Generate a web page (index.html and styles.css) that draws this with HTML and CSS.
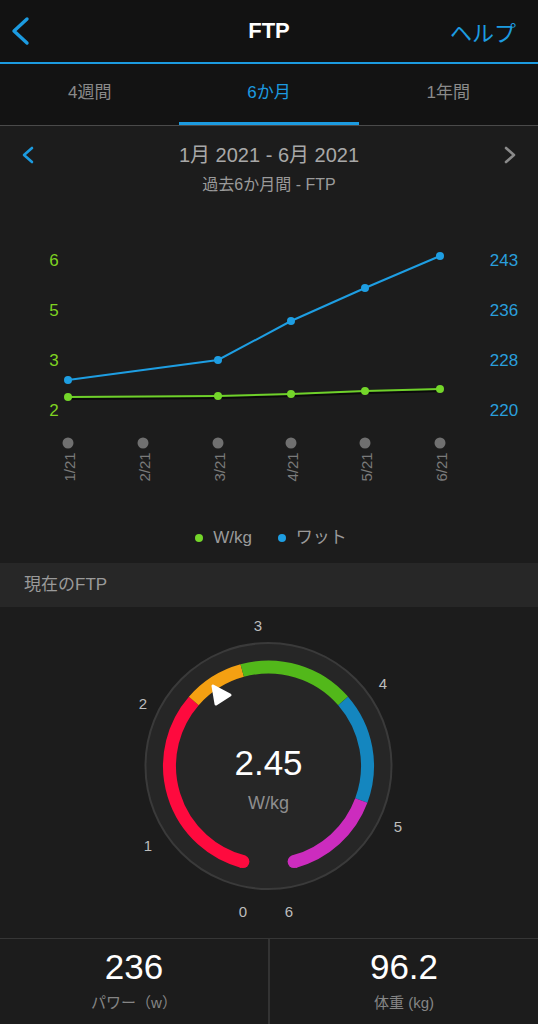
FILE: index.html
```html
<!DOCTYPE html>
<html lang="ja">
<head>
    <meta charset="UTF-8">
    <meta name="viewport" content="width=device-width, initial-scale=1.0">
    <title>FTP</title>
    <link rel="stylesheet" href="styles.css">
</head>
<body>

<header class="topbar">
    <svg class="back" width="40" height="62" viewBox="0 0 40 62">
        <polyline points="27,19 14,31 27,43" />
    </svg>
    <h1>FTP</h1>
    <a class="help">ヘルプ</a>
</header>

<nav class="tabs">
    <div class="tab">4週間</div>
    <div class="tab active">6か月</div>
    <div class="tab">1年間</div>
</nav>

<main class="page">
    <div class="range">
        <div class="range-row">
            <svg class="chev chev-left" width="14" height="20" viewBox="0 0 14 20">
                <polyline points="11,3 3,10 11,17" />
            </svg>
            <div class="range-title">1月 2021 - 6月 2021</div>
            <svg class="chev chev-right" width="14" height="20" viewBox="0 0 14 20">
                <polyline points="3,3 11,10 3,17" />
            </svg>
        </div>
        <div class="range-sub">過去6か月間 - FTP</div>
    </div>

    <svg class="chart" width="538" height="280" viewBox="0 0 538 280">
        <g class="axis-left">
            <text x="54" y="40">6</text>
            <text x="54" y="90">5</text>
            <text x="54" y="140">3</text>
            <text x="54" y="190">2</text>
        </g>
        <g class="axis-right">
            <text x="504" y="40">243</text>
            <text x="504" y="90">236</text>
            <text x="504" y="140">228</text>
            <text x="504" y="190">220</text>
        </g>

        <polyline class="line-green-shadow" points="68,179 218,178 291,176 365,173 440,171" />
        <polyline class="line-blue" points="68,160 218,140 291,101 365,68 440,36" />
        <polyline class="line-green" points="68,177 218,176 291,174 365,171 440,169" />

        <g class="pts-blue">
            <circle cx="68" cy="160" r="4" />
            <circle cx="218" cy="140" r="4" />
            <circle cx="291" cy="101" r="4" />
            <circle cx="365" cy="68" r="4" />
            <circle cx="440" cy="36" r="4" />
        </g>
        <g class="pts-green">
            <circle cx="68" cy="177" r="4" />
            <circle cx="218" cy="176" r="4" />
            <circle cx="291" cy="174" r="4" />
            <circle cx="365" cy="171" r="4" />
            <circle cx="440" cy="169" r="4" />
        </g>

        <g class="ticks">
            <circle cx="68" cy="223" r="5.5" />
            <circle cx="143" cy="223" r="5.5" />
            <circle cx="218" cy="223" r="5.5" />
            <circle cx="291" cy="223" r="5.5" />
            <circle cx="365" cy="223" r="5.5" />
            <circle cx="440" cy="223" r="5.5" />
        </g>
        <g class="months">
            <text transform="translate(69,247) rotate(-90)">1/21</text>
            <text transform="translate(144,247) rotate(-90)">2/21</text>
            <text transform="translate(219,247) rotate(-90)">3/21</text>
            <text transform="translate(292,247) rotate(-90)">4/21</text>
            <text transform="translate(366,247) rotate(-90)">5/21</text>
            <text transform="translate(441,247) rotate(-90)">6/21</text>
        </g>
    </svg>

    <div class="legend">
        <span class="dot dot-green"></span><span class="legend-label">W/kg</span>
        <span class="dot dot-blue"></span><span class="legend-label">ワット</span>
    </div>

    <div class="section-head">現在のFTP</div>

    <svg class="gauge" width="538" height="331" viewBox="0 0 538 331">
        <circle class="gauge-bg" cx="268.5" cy="159" r="123" />

        <!-- zones, clockwise from 0 -->
        <path class="zone zone-red" d="M242.9,254.6 A99,99 0 0 1 193.8,94.0" />
        <path class="zone zone-orange" d="M193.8,94.0 A99,99 0 0 1 242.2,63.6" />
        <path class="zone zone-green" d="M242.2,63.6 A99,99 0 0 1 343.1,93.9" />
        <path class="zone zone-blue" d="M343.1,93.9 A99,99 0 0 1 361.3,193.5" />
        <path class="zone zone-magenta" d="M361.3,193.5 A99,99 0 0 1 294.1,254.6" />
        <circle class="cap-red" cx="242.9" cy="254.6" r="6.5" />
        <circle class="cap-magenta" cx="294.1" cy="254.6" r="6.5" />

        <polygon class="pointer" points="213,79 216,97 230,88" />

        <g class="scale">
            <text x="258" y="18">3</text>
            <text x="383" y="76">4</text>
            <text x="143" y="96">2</text>
            <text x="398" y="219">5</text>
            <text x="148" y="238">1</text>
            <text x="243" y="304">0</text>
            <text x="289" y="304">6</text>
        </g>

        <text class="gauge-value" x="268.5" y="155">2.45</text>
        <text class="gauge-unit" x="268.5" y="196">W/kg</text>
    </svg>

    <div class="stats">
        <div class="stat">
            <div class="stat-value">236</div>
            <div class="stat-label">パワー（w）</div>
        </div>
        <div class="stat">
            <div class="stat-value">96.2</div>
            <div class="stat-label">体重 (kg)</div>
        </div>
    </div>
</main>

</body>
</html>
```

FILE: styles.css
```css
body {
    margin: 0;
    background-color: #1c1c1c;
    font-family: "Liberation Sans", "Noto Sans CJK JP", sans-serif;
    color: #aaaaaa;
}

.topbar {
    display: grid;
    grid-template-columns: 1fr auto 1fr;
    align-items: center;
    height: 62px;
    background-color: #121212;
    border-bottom: 2px solid #1c9be0;
}

.topbar h1 {
    margin: 0;
    font-size: 22px;
    font-weight: bold;
    color: #ffffff;
}

.back {
    display: block;
}

.back polyline {
    fill: none;
    stroke: #1c9be0;
    stroke-width: 3.4;
    stroke-linecap: round;
    stroke-linejoin: round;
}

.help {
    justify-self: end;
    padding-right: 22px;
    font-size: 22px;
    color: #1c9be0;
}

.tabs {
    display: flex;
    background-color: #131313;
    border-bottom: 1px solid #4a4a4a;
}

.tab {
    flex: 1;
    height: 58px;
    line-height: 58px;
    text-align: center;
    font-size: 17px;
    color: #8a8a8a;
    border-bottom: 3px solid transparent;
}

.tab.active {
    color: #1c9be0;
    border-bottom-color: #1c9be0;
}

.page {
    background-color: #1c1c1c;
}

.range {
    height: 94px;
    box-sizing: border-box;
    padding-top: 17px;
}

.range-row {
    display: flex;
    align-items: center;
    justify-content: space-between;
    padding: 0 21px 0 21px;
    height: 24px;
}

.range-title {
    font-size: 20px;
    line-height: 24px;
    color: #a8a8a8;
}

.chev polyline {
    fill: none;
    stroke-width: 2.6;
    stroke-linecap: round;
    stroke-linejoin: round;
}

.chev-left polyline {
    stroke: #1c9be0;
}

.chev-right polyline {
    stroke: #8a8a8a;
}

.range-sub {
    margin-top: 8px;
    text-align: center;
    font-size: 16px;
    line-height: 20px;
    color: #9a9a9a;
}

.chart {
    display: block;
}

.chart text {
    dominant-baseline: central;
    text-anchor: middle;
}

.axis-left text {
    font-size: 17px;
    fill: #7ed321;
}

.axis-right text {
    font-size: 17px;
    fill: #2a9fdc;
}

.line-blue {
    fill: none;
    stroke: #1e9ee2;
    stroke-width: 2;
}

.line-green {
    fill: none;
    stroke: #6fd12a;
    stroke-width: 2;
}

.line-green-shadow {
    fill: none;
    stroke: #0a0a0a;
    stroke-width: 2;
}

.pts-blue circle {
    fill: #1e9ee2;
}

.pts-green circle {
    fill: #74d62a;
}

.ticks circle {
    fill: #707070;
}

.months text {
    font-size: 15px;
    fill: #7a7a7a;
}

.legend {
    display: flex;
    justify-content: center;
    align-items: center;
    height: 63px;
    box-sizing: border-box;
    padding-top: 12px;
    padding-left: 4px;
}

.dot {
    width: 8px;
    height: 8px;
    border-radius: 50%;
    margin-right: 10px;
}

.dot-green {
    background-color: #74d62a;
}

.dot-blue {
    background-color: #1e9ee2;
    margin-left: 26px;
}

.legend-label {
    font-size: 17px;
    line-height: 22px;
    color: #9a9a9a;
}

.section-head {
    height: 44px;
    line-height: 44px;
    padding-left: 24px;
    background-color: #272727;
    font-size: 17px;
    color: #9a9a9a;
}

.gauge {
    display: block;
}

.gauge-bg {
    fill: #262626;
    stroke: #3a3a3a;
    stroke-width: 2;
}

.zone {
    fill: none;
    stroke-width: 13;
}

.zone-red {
    stroke: #fe0a3e;
}

.zone-orange {
    stroke: #f4a012;
}

.zone-green {
    stroke: #52b81a;
}

.zone-blue {
    stroke: #1486bf;
}

.zone-magenta {
    stroke: #cc2cbe;
}

.cap-red {
    fill: #fe0a3e;
}

.cap-magenta {
    fill: #cc2cbe;
}

.pointer {
    fill: #ffffff;
    stroke: #ffffff;
    stroke-width: 3;
    stroke-linejoin: round;
}

.gauge text {
    text-anchor: middle;
    dominant-baseline: central;
}

.scale text {
    font-size: 15px;
    fill: #bdbdbd;
}

.gauge-value {
    font-size: 35px;
    fill: #ffffff;
}

.gauge-unit {
    font-size: 18px;
    fill: #8e8e8e;
}

.stats {
    display: flex;
    border-top: 1px solid #363636;
}

.stat {
    flex: 1;
    height: 85px;
    box-sizing: border-box;
    padding-top: 9px;
    text-align: center;
}

.stat + .stat {
    border-left: 2px solid #333333;
}

.stat-value {
    font-size: 35px;
    line-height: 38px;
    color: #ffffff;
}

.stat-label {
    margin-top: 7px;
    font-size: 15px;
    line-height: 20px;
    color: #858585;
}
```
